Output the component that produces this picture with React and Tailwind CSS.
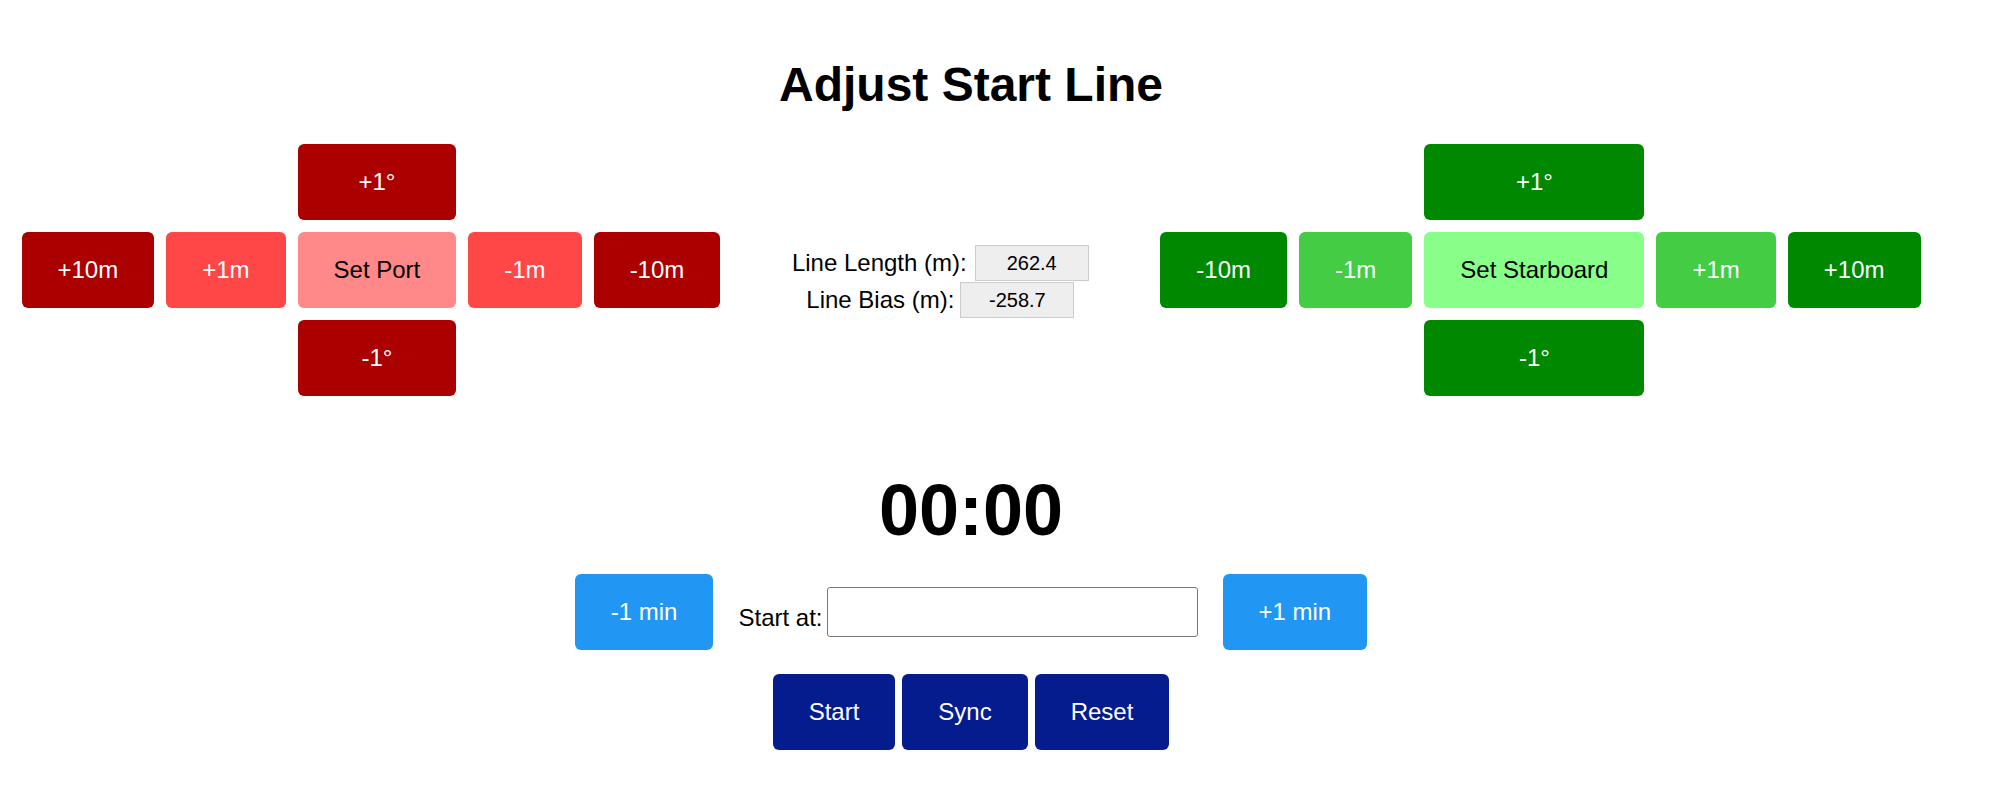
import React from 'react'

const Btn = ({ label, className = '' }) => (
    <button className={`h-[76px] px-[36px] rounded-[6px] text-[24px] leading-none whitespace-nowrap ${className}`}>
        {label}
    </button>
)

const portDark = 'bg-[#aa0000] text-white'
const portMid = 'bg-[#ff4747] text-white'
const stbdDark = 'bg-[#008800] text-white'
const stbdMid = 'bg-[#44cc44] text-white'

const AdjustGrid = ({ side }) => {
    const port = side === 'port'
    const dark = port ? portDark : stbdDark
    const mid = port ? portMid : stbdMid
    const setCls = port ? 'bg-[#ff8888] text-black' : 'bg-[#88ff88] text-black'

    return (
        <div className="grid grid-cols-[auto_auto_auto_auto_auto] gap-[12px]">
            {/* Angle up */}
            <div />
            <div />
            <Btn label="+1°" className={dark} />
            <div />
            <div />

            {/* Distance row */}
            <Btn label={port ? '+10m' : '-10m'} className={dark} />
            <Btn label={port ? '+1m' : '-1m'} className={mid} />
            <Btn label={port ? 'Set Port' : 'Set Starboard'} className={setCls} />
            <Btn label={port ? '-1m' : '+1m'} className={mid} />
            <Btn label={port ? '-10m' : '+10m'} className={dark} />

            {/* Angle down */}
            <div />
            <div />
            <Btn label="-1°" className={dark} />
            <div />
            <div />
        </div>
    )
}

const Stat = ({ label, value, gap }) => (
    <div className={`flex items-center h-[36px] whitespace-nowrap ${gap}`}>
        <span className="text-[24px] shrink-0">{label}</span>
        <span className="w-[114px] h-[36px] shrink-0 flex items-center justify-center bg-[#eeeeee] border border-[#cccccc] text-[20px]">
            {value}
        </span>
    </div>
)

export default function App() {
    return (
        <div className="min-h-screen bg-white text-black font-['Liberation_Sans',Arial,sans-serif]">
            <div className="ml-[12px] w-[1918px] flex flex-col items-center">
                <h1 className="mt-[57px] text-[48px] leading-[55px] font-bold">Adjust Start Line</h1>

                {/* Line adjust controls */}
                <div className="mt-[32px] flex items-start">
                    <AdjustGrid side="port" />
                    <div className="mx-[72px] w-[296px] shrink-0 mt-[101px] flex flex-col items-center gap-[1px]">
                        <Stat label="Line Length (m):" value="262.4" gap="gap-[8px]" />
                        <Stat label="Line Bias (m):" value="-258.7" gap="gap-[6px]" />
                    </div>
                    <AdjustGrid side="starboard" />
                </div>

                {/* Timer */}
                <div className="mt-[73px] text-[72px] leading-[83px] font-bold">00:00</div>

                <div className="mt-[22px] flex items-center">
                    <Btn label="-1 min" className="bg-[#2196f3] text-white" />
                    <label className="ml-[25px] pt-[12px] text-[24px] whitespace-nowrap">Start at:</label>
                    <input
                        type="text"
                        className="ml-[4px] w-[371px] h-[50px] border border-[#767676] rounded-[3px] bg-white px-2 text-[20px]"
                    />
                    <Btn label="+1 min" className="ml-[25px] bg-[#2196f3] text-white" />
                </div>

                <div className="mt-[24px] flex gap-[7px]">
                    <Btn label="Start" className="bg-[#051c8e] text-white" />
                    <Btn label="Sync" className="bg-[#051c8e] text-white" />
                    <Btn label="Reset" className="bg-[#051c8e] text-white" />
                </div>
            </div>
        </div>
    )
}
